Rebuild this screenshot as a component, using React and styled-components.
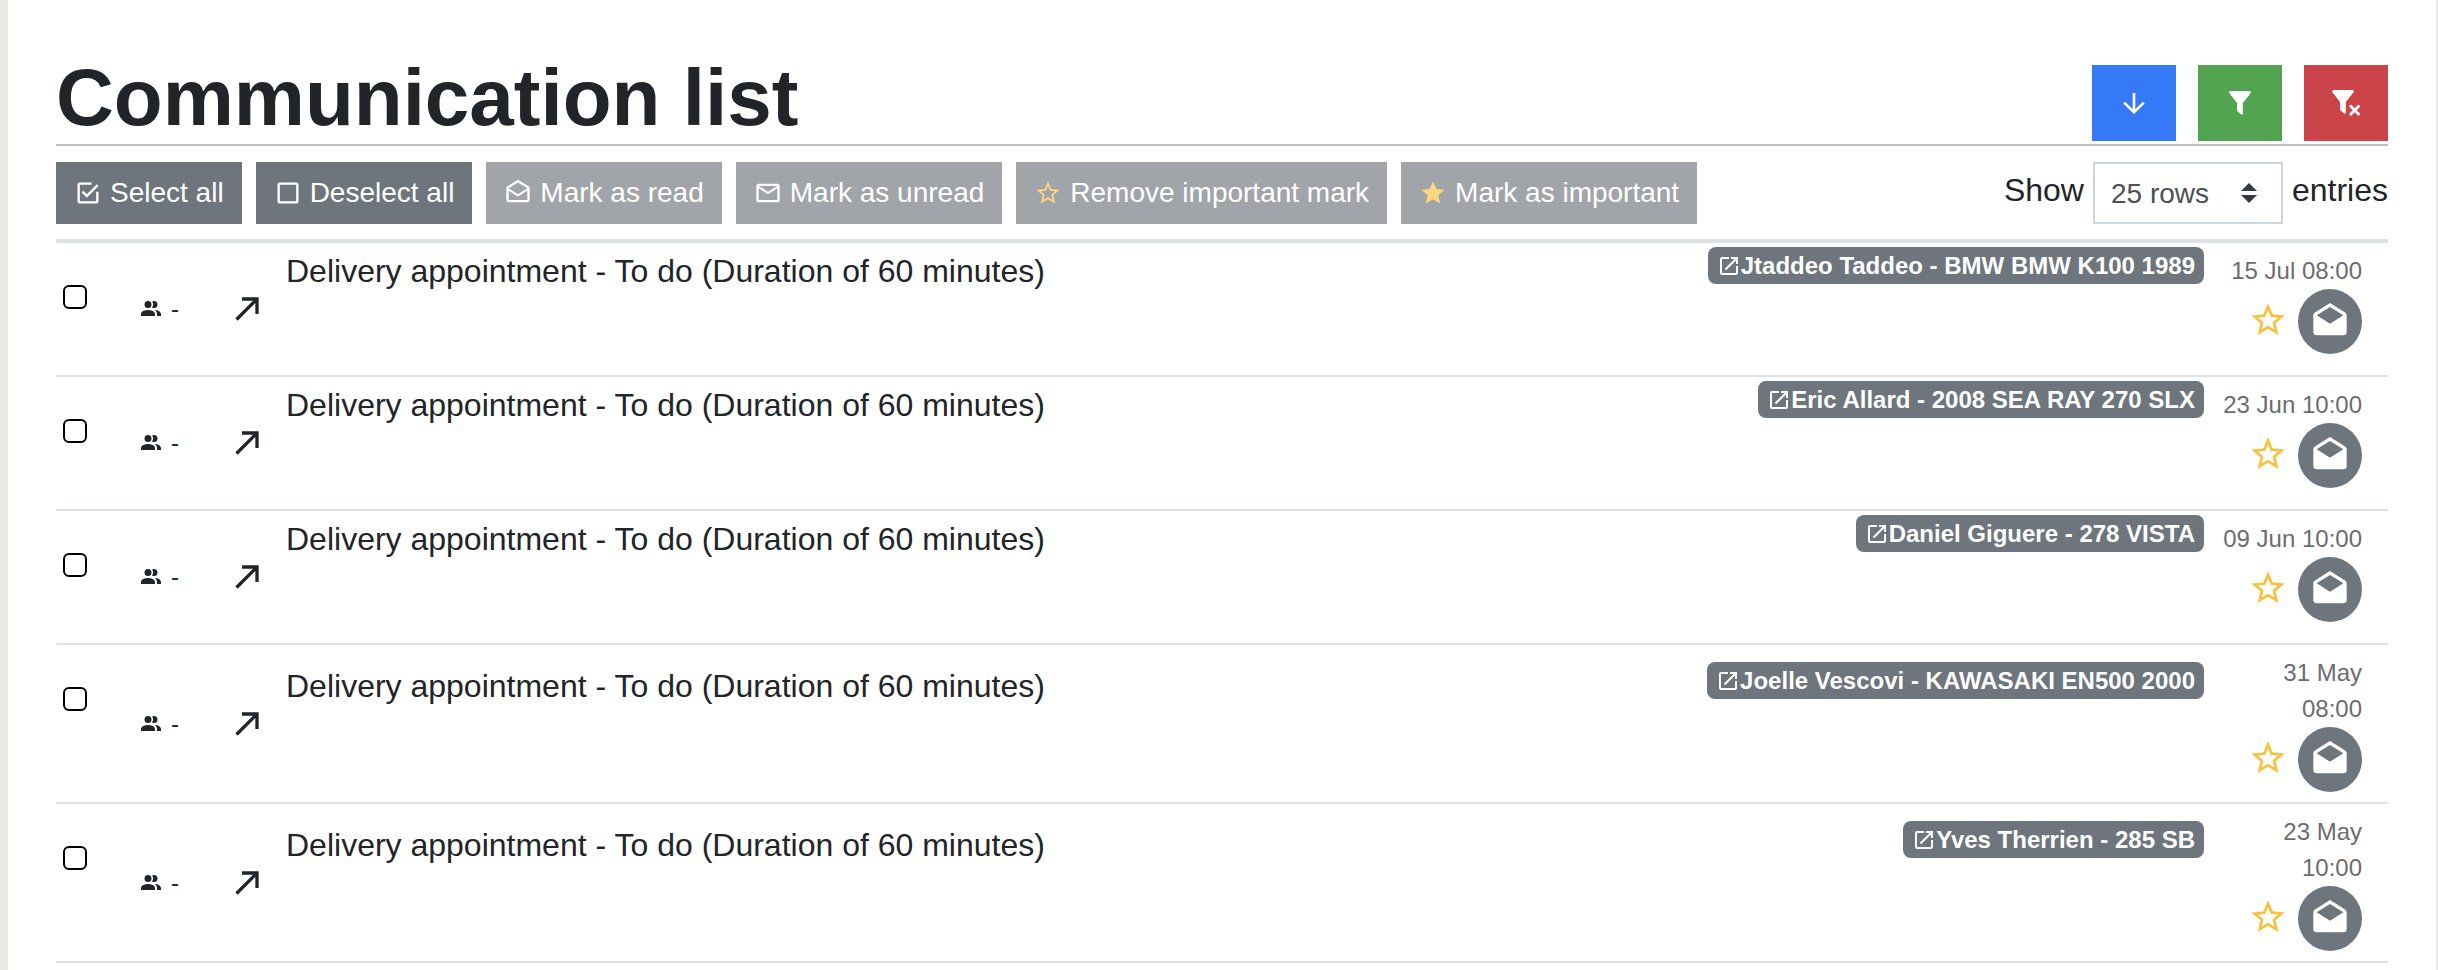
import React from "react";
import styled, { createGlobalStyle } from "styled-components";
import {
  MdCheckBoxOutlineBlank,
  MdMailOutline,
  MdStarBorder,
  MdStar,
  MdOpenInNew,
} from "react-icons/md";

const GlobalStyle = createGlobalStyle`
  * {
    box-sizing: border-box;
  }

  body {
    margin: 0;
    background-color: #e9e8e2;
    color: #212529;
    font-family: "Liberation Sans", Arial, sans-serif;
    font-size: 32px;
    line-height: 48px;
  }
`;

const Page = styled.main`
  min-height: 100vh;
  margin: 0 2px 0 8px;
  padding: 65px 48px 0;
  background-color: #fff;
`;

const Header = styled.header`
  display: flex;
  justify-content: space-between;
  align-items: flex-start;
  padding-bottom: 3px;
  border-bottom: 2px solid #c0c0c0;
`;

const Title = styled.h1`
  margin: 0;
  font-size: 80px;
  line-height: 66px;
`;

const HeaderActions = styled.div`
  display: flex;
  gap: 22px;
`;

const ActionButton = styled.button`
  display: flex;
  align-items: center;
  justify-content: center;
  width: 84px;
  height: 76px;
  padding: 0;
  border: 0;
  background-color: ${(props) => props.$color};
  color: #fff;
  cursor: pointer;
`;

const Toolbar = styled.div`
  display: flex;
  justify-content: space-between;
  align-items: center;
  padding: 16px 0 15px;
`;

const ButtonGroup = styled.div`
  display: flex;
  gap: 14px;
`;

const ToolButton = styled.button`
  display: flex;
  align-items: center;
  gap: 8px;
  height: 62px;
  padding: 0 18px;
  border: 0;
  background-color: ${(props) => (props.disabled ? "#a1a4a9" : "#6e757d")};
  color: #fff;
  font-family: inherit;
  font-size: 28px;
  white-space: nowrap;

  svg {
    color: ${(props) => (props.$star ? "#fbd77f" : "#fff")};
  }
`;

const Entries = styled.label`
  display: flex;
  align-items: center;
  gap: 9px;
`;

const EntriesText = styled.span`
  padding-bottom: 6px;
`;

const SelectBox = styled.span`
  display: grid;
  align-items: center;
`;

const Select = styled.select`
  grid-area: 1 / 1;
  width: 190px;
  height: 62px;
  padding: 0 16px;
  border: 2px solid #ced4da;
  border-radius: 0;
  appearance: none;
  background-color: #fff;
  color: #495057;
  font-family: inherit;
  font-size: 28px;
`;

const SelectArrows = styled.svg`
  grid-area: 1 / 1;
  justify-self: end;
  margin-right: 26px;
  pointer-events: none;
`;

const Table = styled.table`
  width: 100%;
  border-collapse: separate;
  border-spacing: 0;
  table-layout: fixed;
  border-top: 4px solid #dee2e6;
`;

const Row = styled.tr`
  height: ${(props) => (props.$tall ? "159px" : "134px")};
`;

const Cell = styled.td`
  width: ${(props) => props.$width || "auto"};
  padding: ${(props) => props.$padding || "0"};
  border-bottom: 2px solid #dee2e6;
  vertical-align: ${(props) => props.$align || "top"};
`;

const Checkbox = styled.input`
  display: block;
  width: 24px;
  height: 24px;
  margin: 0;
  border: 2px solid #000;
  border-radius: 6px;
  appearance: none;

  &:checked {
    background-color: #3579f6;
  }
`;

const People = styled.div`
  display: flex;
  align-items: center;
  gap: 8px;
  font-size: 24px;
`;

const Direction = styled.div`
  display: flex;
`;

const Subject = styled.div`
  display: flex;
  justify-content: space-between;
  padding-top: ${(props) => (props.$tall ? "17px" : "4px")};
`;

const Badge = styled.a`
  display: flex;
  align-items: center;
  height: 37px;
  padding: 0 9px;
  border-radius: 8px;
  background-color: #6e757d;
  color: #fff;
  font-size: 24px;
  font-weight: 700;
  text-decoration: none;
  white-space: nowrap;
`;

const Meta = styled.div`
  display: flex;
  flex-direction: column;
  align-items: flex-end;
  color: #6c6c6c;
  font-size: 24px;
  line-height: 36px;
  text-align: right;
`;

const MetaActions = styled.div`
  display: flex;
  align-items: center;
  gap: 10px;
`;

const StarButton = styled.button`
  display: flex;
  padding: 0 0 4px;
  border: 0;
  background: none;
  color: #fac03c;
`;

const ReadButton = styled.button`
  display: flex;
  align-items: center;
  justify-content: center;
  width: 64px;
  height: 65px;
  padding: 0;
  border: 0;
  border-radius: 50%;
  background-color: #6e757d;
  color: #fff;
`;

const Icon = ({ size, path }) => (
  <svg width={size} height={size} viewBox="0 0 24 24" fill="currentColor" aria-hidden="true">
    <path d={path} />
  </svg>
);

const CheckboxMarkedIcon = ({ size }) => (
  <Icon
    size={size}
    path="M19 19H5V5h10V3H5c-1.110 0-2 .89-2 2v14a2 2 0 0 0 2 2h14a2 2 0 0 0 2-2v-8h-2M7.910 10.080 6.500 11.500 11 16 21 6l-1.410-1.420L11 13.170z"
  />
);

const EmailOpenOutlineIcon = ({ size }) => (
  <Icon
    size={size}
    path="M21.030 6.290 12 .64 2.970 6.290C2.390 6.640 2 7.270 2 8v10a2 2 0 0 0 2 2h16a2 2 0 0 0 2-2V8c0-.73-.39-1.360-.97-1.710M20 18H4v-8l8 5 8-5zM12 13 4 8l8-5 8 5z"
  />
);

const EmailOpenIcon = ({ size }) => (
  <Icon
    size={size}
    path="m4 8 8 5 8-5-8-5zM22 8v10a2 2 0 0 1-2 2H4a2 2 0 0 1-2-2V8c0-.73.39-1.360.97-1.710L12 .64l9.030 5.650c.58.35.97.98.97 1.710z"
  />
);

const AccountMultipleIcon = ({ size }) => (
  <Icon
    size={size}
    path="M16 17v2H2v-2s0-4 7-4 7 4 7 4M12.500 7.500A3.500 3.500 0 1 0 9 11a3.500 3.500 0 0 0 3.500-3.500M15.940 13A5.320 5.320 0 0 1 18 17v2h4v-2s0-3.630-6.060-4M15 4a3.390 3.390 0 0 0-1.930.59 5 5 0 0 1 0 5.820A3.390 3.390 0 0 0 15 11a3.500 3.500 0 0 0 0-7z"
  />
);

const ArrowTopRightIcon = ({ size }) => (
  <Icon size={size} path="M5 17.590 15.590 7H9V5h10v10h-2V8.410L6.410 19z" />
);

const ArrowDownIcon = () => (
  <svg width="22" height="22" viewBox="0 0 22 22" fill="none" stroke="currentColor" strokeWidth="2.6">
    <path d="M11 1v19M1.2 10.6 11 20.2l9.8-9.6" />
  </svg>
);

const FilterIcon = () => (
  <svg width="22" height="24" viewBox="0 0 22 24" fill="currentColor">
    <path d="M1 0h20q1.400 .8 .4 2.400L13.800 12v11q-.4 1-1.400 .6L8.600 20.600Q8 20 8 19V12L.6 2.400Q-.4 .8 1 0z" />
  </svg>
);

const FilterRemoveIcon = () => (
  <svg width="29" height="26" viewBox="0 0 29 26">
    <path
      fill="currentColor"
      d="M1 0h20q1.400 .8 .4 2.400L13.800 12v11q-.4 1-1.400 .6L8.600 20.600Q8 20 8 19V12L.6 2.400Q-.4 .8 1 0z"
    />
    <path d="m18 15.500 9.400 9.400m0-9.400L18 24.900" stroke="currentColor" strokeWidth="2.800" />
  </svg>
);

const tools = [
  { label: "Select all", icon: CheckboxMarkedIcon },
  { label: "Deselect all", icon: MdCheckBoxOutlineBlank },
  { label: "Mark as read", icon: EmailOpenOutlineIcon, disabled: true },
  { label: "Mark as unread", icon: MdMailOutline, disabled: true },
  { label: "Remove important mark", icon: MdStarBorder, disabled: true, star: true },
  { label: "Mark as important", icon: MdStar, disabled: true, star: true },
];

const communications = [
  { client: "Jtaddeo Taddeo - BMW BMW K100 1989", date: ["15 Jul 08:00"] },
  { client: "Eric Allard - 2008 SEA RAY 270 SLX", date: ["23 Jun 10:00"] },
  { client: "Daniel Giguere - 278 VISTA", date: ["09 Jun 10:00"] },
  { client: "Joelle Vescovi - KAWASAKI EN500 2000", date: ["31 May", "08:00"] },
  { client: "Yves Therrien - 285 SB", date: ["23 May", "10:00"] },
];

function CommunicationRow({ client, date }) {
  const tall = date.length > 1;

  return (
    <Row $tall={tall}>
      <Cell $width="83px" $padding="42px 0 0 7px">
        <Checkbox type="checkbox" aria-label={`Select ${client}`} />
      </Cell>
      <Cell $width="88px" $align="middle">
        <People>
          <AccountMultipleIcon size={24} /> -
        </People>
      </Cell>
      <Cell $width="59px" $align="middle">
        <Direction>
          <ArrowTopRightIcon size={40} />
        </Direction>
      </Cell>
      <Cell>
        <Subject $tall={tall}>
          <span>Delivery appointment - To do (Duration of 60 minutes)</span>
          <Badge href="#">
            <MdOpenInNew size={24} />
            {client}
          </Badge>
        </Subject>
      </Cell>
      <Cell $width="184px" $padding="10px 26px 0 0">
        <Meta>
          {date.map((part) => (
            <span key={part}>{part}</span>
          ))}
          <MetaActions>
            <StarButton aria-label="Mark as important">
              <MdStarBorder size={40} />
            </StarButton>
            <ReadButton aria-label="Mark as read">
              <EmailOpenIcon size={40} />
            </ReadButton>
          </MetaActions>
        </Meta>
      </Cell>
    </Row>
  );
}

function App() {
  return (
    <>
      <GlobalStyle />
      <Page>
        <Header>
          <Title>Communication list</Title>
          <HeaderActions>
            <ActionButton $color="#3579f6" aria-label="Sort">
              <ArrowDownIcon />
            </ActionButton>
            <ActionButton $color="#53a451" aria-label="Filter">
              <FilterIcon />
            </ActionButton>
            <ActionButton $color="#cb444a" aria-label="Clear filter">
              <FilterRemoveIcon />
            </ActionButton>
          </HeaderActions>
        </Header>
        <Toolbar>
          <ButtonGroup>
            {tools.map(({ label, icon: ToolIcon, disabled, star }) => (
              <ToolButton key={label} disabled={disabled} $star={star}>
                <ToolIcon size={28} />
                {label}
              </ToolButton>
            ))}
          </ButtonGroup>
          <Entries>
            <EntriesText>Show</EntriesText>
            <SelectBox>
              <Select defaultValue="25">
                <option value="25">25 rows</option>
                <option value="50">50 rows</option>
              </Select>
              <SelectArrows width="16" height="20" viewBox="0 0 16 20" fill="#343a40">
                <path d="M0 8 8 0l8 8zM0 12h16l-8 8z" />
              </SelectArrows>
            </SelectBox>
            <EntriesText>entries</EntriesText>
          </Entries>
        </Toolbar>
        <Table>
          <tbody>
            {communications.map((item) => (
              <CommunicationRow key={item.client} {...item} />
            ))}
          </tbody>
        </Table>
      </Page>
    </>
  );
}

export default App;
